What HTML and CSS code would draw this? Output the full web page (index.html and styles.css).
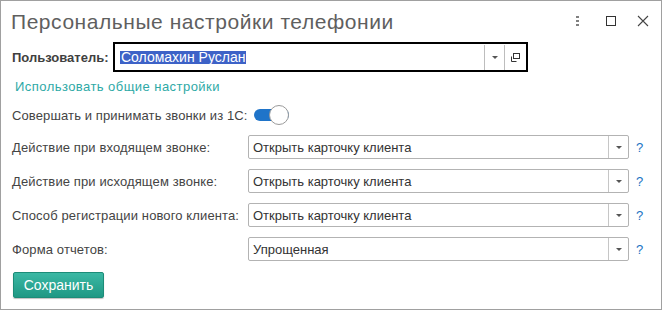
FILE: index.html
```html
<!DOCTYPE html>
<html lang="ru">
<head>
<meta charset="utf-8">
<title>Персональные настройки телефонии</title>
<link rel="stylesheet" href="styles.css">
</head>
<body>
<div class="window">
  <div class="header">
    <h1 class="title">Персональные настройки телефонии</h1>
    <div class="win-actions">
      <span class="win-btn">
        <svg width="6" height="12" viewBox="0 0 6 12"><rect x="1" y="1" width="3" height="2" fill="#808080"/><rect x="1" y="5" width="3" height="2" fill="#808080"/><rect x="1" y="9" width="3" height="2" fill="#808080"/></svg>
      </span>
      <span class="win-btn">
        <svg width="10" height="10" viewBox="0 0 10 10"><rect x="0.5" y="0.5" width="9" height="9" fill="none" stroke="#333" stroke-width="1"/></svg>
      </span>
      <span class="win-btn">
        <svg width="12" height="12" viewBox="0 0 12 12"><path d="M1 1 L11 11 M11 1 L1 11" stroke="#444" stroke-width="1.1" fill="none"/></svg>
      </span>
    </div>
  </div>
  <div class="content">
    <div class="user-row">
      <span class="user-label">Пользователь:</span>
      <div class="user-input">
        <span class="user-value"><span class="selected">Соломахин Руслан</span></span>
        <span class="in-btn"><span class="arrow"></span></span>
        <span class="in-btn open-btn">
          <svg width="9" height="9" viewBox="0 0 9 9"><path d="M0.5 3.5 V8.5 H5.5" fill="none" stroke="#333" stroke-width="1"/><rect x="2.5" y="0.5" width="6" height="5" fill="none" stroke="#333" stroke-width="1"/></svg>
        </span>
      </div>
    </div>
    <a class="link" href="#">Использовать общие настройки</a>
    <div class="toggle-row">
      <span class="label">Совершать и принимать звонки из 1С:</span>
      <span class="toggle"><span class="knob"></span></span>
    </div>
    <div class="field-row">
      <span class="label">Действие при входящем звонке:</span>
      <div class="select"><span class="select-value">Открыть карточку клиента</span><span class="select-btn"><span class="arrow"></span></span></div>
      <span class="help">?</span>
    </div>
    <div class="field-row">
      <span class="label">Действие при исходящем звонке:</span>
      <div class="select"><span class="select-value">Открыть карточку клиента</span><span class="select-btn"><span class="arrow"></span></span></div>
      <span class="help">?</span>
    </div>
    <div class="field-row">
      <span class="label">Способ регистрации нового клиента:</span>
      <div class="select"><span class="select-value">Открыть карточку клиента</span><span class="select-btn"><span class="arrow"></span></span></div>
      <span class="help">?</span>
    </div>
    <div class="field-row">
      <span class="label">Форма отчетов:</span>
      <div class="select"><span class="select-value">Упрощенная</span><span class="select-btn"><span class="arrow"></span></span></div>
      <span class="help">?</span>
    </div>
    <div class="actions">
      <button class="btn-save">Сохранить</button>
    </div>
  </div>
</div>
</body>
</html>
```

FILE: styles.css
```css
* { box-sizing: border-box; }
html, body { margin: 0; padding: 0; background: #fff; }
body {
  font-family: "Liberation Sans", Arial, sans-serif;
  font-size: 13px;
  color: #444;
}
.window {
  width: 662px;
  height: 310px;
  border: 1px solid #a0a0a0;
  background: #fff;
  display: flex;
  flex-direction: column;
}
.header {
  height: 40px;
  display: flex;
  align-items: flex-start;
  justify-content: space-between;
  padding: 8px 0 0 10px;
}
.title {
  margin: 0;
  font-weight: normal;
  font-size: 21px;
  letter-spacing: 0.55px;
  line-height: 25px;
  color: #5f5f5f;
}
.win-actions {
  display: flex;
  align-items: center;
  padding-top: 6px;
  padding-right: 12px;
}
.win-btn {
  display: flex;
  align-items: center;
  justify-content: center;
  height: 12px;
}
.win-btn:nth-child(1) { width: 6px; margin-right: 25px; }
.win-btn:nth-child(2) { width: 10px; margin-right: 21px; }
.win-btn:nth-child(3) { width: 12px; }

.content {
  display: flex;
  flex-direction: column;
  padding: 0 0 0 11px;
}
.label { letter-spacing: 0.12px; }
.user-row {
  display: flex;
  align-items: center;
  height: 30px;
  margin-top: 1px;
}
.user-label {
  font-weight: bold;
  color: #404040;
  width: 101px;
}
.user-input {
  width: 415px;
  height: 30px;
  border: 2px solid #000;
  display: flex;
  align-items: center;
  padding: 0 0 0 5px;
}
.user-value {
  flex: 1;
  display: flex;
}
.selected {
  background: #3d62c7;
  color: #fff;
  font-size: 14px;
  line-height: 13px;
  padding: 0 1px;
}
.in-btn {
  height: 25px;
  border-left: 1px solid #bdbdbd;
  width: 20px;
  display: flex;
  align-items: center;
  justify-content: center;
}
.open-btn { width: 22px; }
.arrow {
  width: 0;
  height: 0;
  border-left: 3px solid transparent;
  border-right: 3px solid transparent;
  border-top: 3px solid #555;
}
.link {
  color: #2ea9a6;
  text-decoration: none;
  font-size: 13px;
  letter-spacing: 0.45px;
  line-height: 20px;
  margin-top: 5px;
  margin-left: 3px;
  align-self: flex-start;
}
.toggle-row {
  display: flex;
  align-items: center;
  height: 20px;
  margin-top: 8px;
}
.toggle-row .label { margin-right: 6px; }
.toggle {
  position: relative;
  width: 35px;
  height: 12px;
  background: #1f74c9;
  border-radius: 6px;
}
.knob {
  position: absolute;
  right: 0;
  top: -4px;
  width: 20px;
  height: 20px;
  border-radius: 50%;
  background: #fff;
  border: 1px solid #9a9a9a;
}
.field-row {
  display: grid;
  grid-template-columns: 236px 381px auto;
  align-items: center;
  height: 24px;
  margin-top: 10px;
}
.select {
  height: 24px;
  border: 1px solid #b3b3b3;
  border-radius: 2px;
  display: flex;
  align-items: center;
}
.select-value {
  flex: 1;
  padding-left: 4px;
  color: #333;
}
.select-btn {
  width: 20px;
  height: 22px;
  border-left: 1px solid #c6c6c6;
  display: flex;
  align-items: center;
  justify-content: center;
}
.help {
  color: #1a73c3;
  padding-left: 7px;
  font-size: 13px;
}
.actions {
  margin-top: 11px;
  padding-left: 1px;
}
.btn-save {
  width: 91px;
  height: 26px;
  border: 1px solid #1c8c78;
  border-radius: 2px;
  background: linear-gradient(#3bb8a4, #1f9884);
  color: #fff;
  font-family: "Liberation Sans", Arial, sans-serif;
  font-size: 14px;
  padding: 0;
  box-shadow: 0 1px 1px rgba(0,0,0,0.25);
}
```
